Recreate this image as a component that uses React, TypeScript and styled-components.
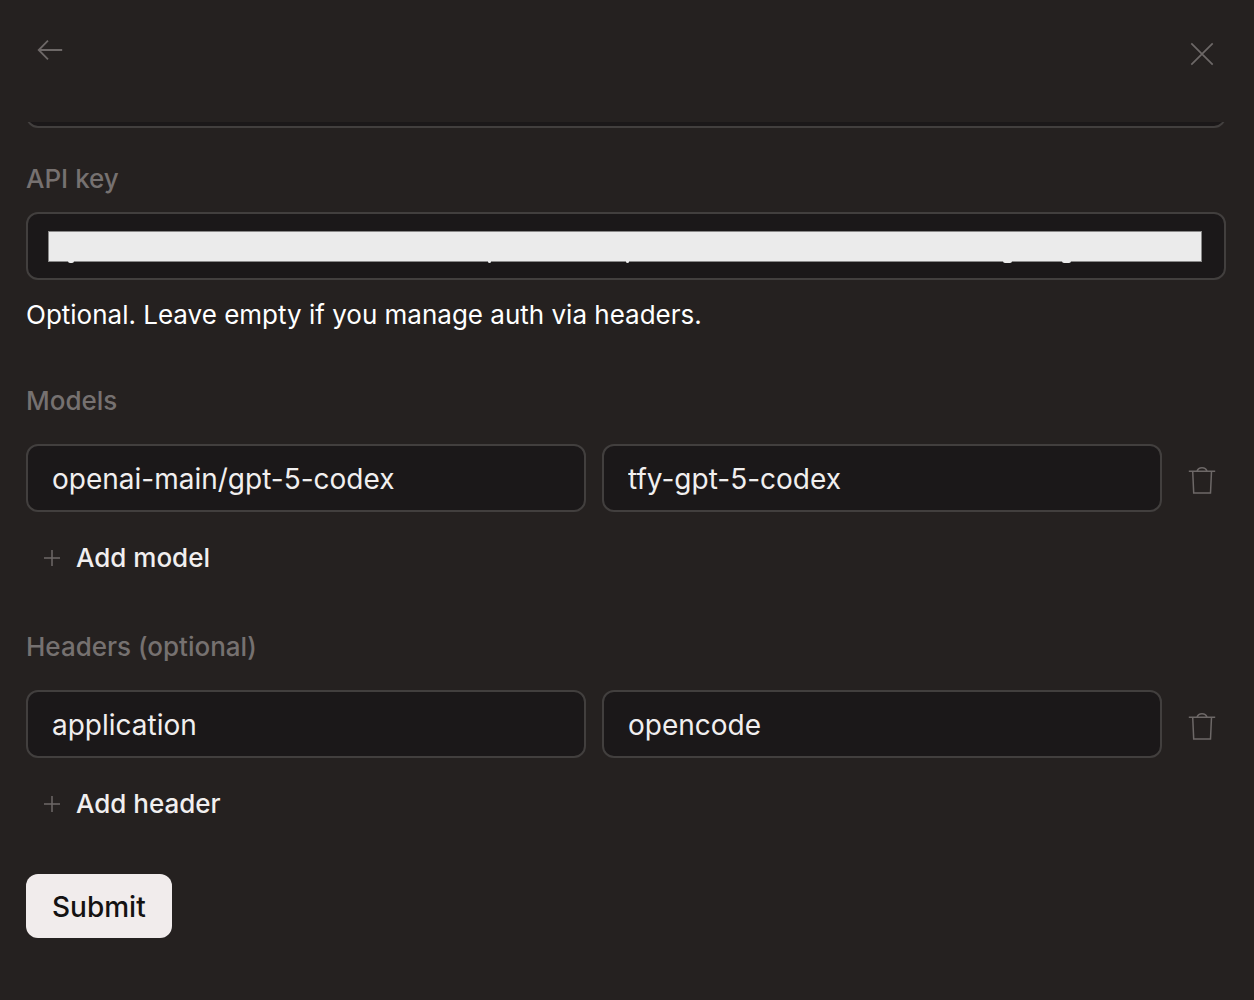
import React from "react";
import styled, { createGlobalStyle } from "styled-components";

const color = {
  surface: "#252120",
  field: "#1b1819",
  border: "#423f3e",
  muted: "#767170",
  icon: "#6d6867",
  text: "#f1efef",
  white: "#ffffff",
  action: "#f1ecec",
  mask: "#ebebeb",
};

const GlobalStyle = createGlobalStyle`
  *, *::before, *::after { box-sizing: border-box; }
  body { margin: 0; background: ${color.surface}; }
  button, input { font: inherit; letter-spacing: inherit; }
`;

const Dialog = styled.main`
  min-height: 100vh;
  padding: 0 28px 32px 26px;
  background: ${color.surface};
  color: ${color.text};
  font-family: Inter, "Liberation Sans", sans-serif;
  font-size: 26px;
  line-height: 42px;
`;

const TopBar = styled.header`
  display: flex;
  justify-content: space-between;
  align-items: flex-start;
  height: 122px;
  padding-top: 26px;
`;

const IconButton = styled.button<{ $drop?: boolean }>`
  display: grid;
  place-items: center;
  width: 48px;
  height: ${(p) => (p.$drop ? "56px" : "48px")};
  padding: 0;
  border: 0;
  background: transparent;
  color: ${color.icon};
  cursor: pointer;
`;

const Icon = styled.svg`
  display: block;
  width: 32px;
  height: 32px;
  fill: none;
  stroke: currentColor;
`;

const ScrolledField = styled.div`
  display: flex;
  flex-direction: column;
  justify-content: flex-end;
  height: 6px;
  margin-bottom: 30px;
  overflow: hidden;
`;

const Form = styled.form`
  display: flex;
  flex-direction: column;
  align-items: flex-start;
  gap: 46px;
`;

const Groups = styled.div`
  display: flex;
  flex-direction: column;
  gap: 44px;
  width: 100%;
`;

const Group = styled.section<{ $gap: number }>`
  display: flex;
  flex-direction: column;
  align-items: flex-start;
  gap: ${(p) => p.$gap}px;
`;

const Label = styled.label`
  color: ${color.muted};
  font-weight: 500;
`;

const GroupTitle = styled.h2`
  margin: 0;
  color: ${color.muted};
  font-size: 26px;
  font-weight: 500;
`;

const Hint = styled.p`
  margin: 0;
  padding-top: 2px;
  color: ${color.white};
`;

const TextInput = styled.input`
  flex-shrink: 0;
  width: 100%;
  min-width: 0;
  height: 68px;
  padding: 2px 24px 0;
  border: 2px solid ${color.border};
  border-radius: 12px;
  outline: 0;
  background: ${color.field};
  color: ${color.text};
  font-size: 28px;
`;

const MaskedField = styled.div`
  position: relative;
  width: 100%;
  height: 68px;
`;

const Mask = styled.div`
  position: absolute;
  top: 19px;
  left: 22px;
  right: 24px;
  height: 31px;
  border: 1px solid #898888;
  background: ${color.mask};
`;

const Descender = styled.span<{ $x: number; $w: number }>`
  position: absolute;
  left: ${(p) => p.$x}px;
  bottom: -2px;
  width: ${(p) => p.$w}px;
  height: 2px;
  border-radius: 0 0 2px 2px;
  background: ${color.mask};
`;

const PairRow = styled.div`
  display: grid;
  grid-template-columns: 1fr 1fr 48px;
  align-items: center;
  gap: 16px;
  width: 100%;
`;

const AddButton = styled.button`
  display: flex;
  align-items: center;
  gap: 8px;
  height: 48px;
  padding: 0 10px;
  border: 0;
  background: transparent;
  color: ${color.text};
  font-weight: 500;
  cursor: pointer;

  svg { color: ${color.icon}; }
`;

const SubmitButton = styled.button`
  height: 64px;
  padding: 2px 26px 0;
  border: 0;
  border-radius: 12px;
  background: ${color.action};
  color: #141212;
  font-size: 28px;
  font-weight: 500;
  cursor: pointer;
`;

const ArrowLeft = () => (
  <Icon viewBox="0 0 32 32" strokeWidth="1.8" aria-hidden="true">
    <path d="M14 6.7 4.7 16l9.3 9.3M4.7 16H28.2" />
  </Icon>
);

const Cross = () => (
  <Icon viewBox="0 0 32 32" strokeWidth="1.7" aria-hidden="true">
    <path d="M5.3 5.3l21.4 21.4M26.7 5.3L5.3 26.7" />
  </Icon>
);

const Plus = () => (
  <Icon viewBox="0 0 32 32" strokeWidth="1.5" aria-hidden="true">
    <path d="M16 8v16M8 16h16" />
  </Icon>
);

const Trash = () => (
  <Icon viewBox="0 0 32 32" strokeWidth="1.5" aria-hidden="true">
    <path d="M2.8 9.2H29.2M6.7 9.2L7.7 31H24.5L25.5 9.2M10.9 9.2C11.7 7 13.6 5.8 16 5.8S20.3 7 21.1 9.2" />
  </Icon>
);

type PairProps = { title: string; kind: string; first: string; second: string };

function PairGroup({ title, kind, first, second }: PairProps) {
  return (
    <Group $gap={22}>
      <GroupTitle>{title}</GroupTitle>
      <PairRow>
        <TextInput aria-label={`${kind} key`} defaultValue={first} spellCheck={false} />
        <TextInput aria-label={`${kind} value`} defaultValue={second} spellCheck={false} />
        <IconButton type="button" aria-label={`Remove ${kind}`}>
          <Trash />
        </IconButton>
      </PairRow>
      <AddButton type="button">
        <Plus />
        Add {kind}
      </AddButton>
    </Group>
  );
}

const descenders = [
  { x: 19, w: 6 },
  { x: 439, w: 3 },
  { x: 577, w: 3 },
  { x: 954, w: 9 },
  { x: 1013, w: 9 },
];

export default function App() {
  return (
    <>
      <GlobalStyle />
      <Dialog>
        <TopBar>
          <IconButton type="button" aria-label="Back">
            <ArrowLeft />
          </IconButton>
          <IconButton type="button" aria-label="Close" $drop>
            <Cross />
          </IconButton>
        </TopBar>
        <ScrolledField>
          <TextInput aria-label="Base URL" />
        </ScrolledField>
        <Form onSubmit={(e) => e.preventDefault()}>
          <Groups>
            <Group $gap={12}>
              <Label htmlFor="api-key">API key</Label>
              <MaskedField>
                <TextInput id="api-key" />
                <Mask>
                  {descenders.map((d) => (
                    <Descender key={d.x} $x={d.x} $w={d.w} />
                  ))}
                </Mask>
              </MaskedField>
              <Hint>Optional. Leave empty if you manage auth via headers.</Hint>
            </Group>
            <PairGroup
              title="Models"
              kind="model"
              first="openai-main/gpt-5-codex"
              second="tfy-gpt-5-codex"
            />
            <PairGroup
              title="Headers (optional)"
              kind="header"
              first="application"
              second="opencode"
            />
          </Groups>
          <SubmitButton type="submit">Submit</SubmitButton>
        </Form>
      </Dialog>
    </>
  );
}
